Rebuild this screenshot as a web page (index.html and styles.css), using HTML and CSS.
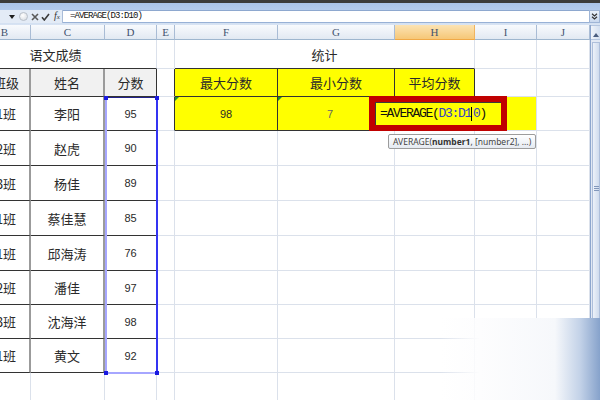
FILE: index.html
```html
<!DOCTYPE html>
<html lang="zh">
<head>
<meta charset="utf-8">
<title>Sheet</title>
<link rel="stylesheet" href="styles.css">
</head>
<body>
<div class="app">
  <div class="topband"></div>
  <div class="fbar">
    <div class="tools">
      <svg class="dd" width="6" height="4" viewBox="0 0 6 4"><path d="M0 0H6L3 4Z" fill="#1e1e1e"/></svg>
      <span class="knob"></span>
      <svg class="ico" width="8" height="8" viewBox="0 0 8 8"><path d="M1 1L7 7M7 1L1 7" stroke="#5a5a5a" stroke-width="1.6" fill="none"/></svg>
      <svg class="ico" width="9" height="8" viewBox="0 0 9 8"><path d="M1 4.2L3.3 7L8 1" stroke="#3a3a3a" stroke-width="1.6" fill="none"/></svg>
      <span class="fx">f<span class="fxs">x</span></span>
    </div>
    <div class="finput">=AVERAGE(D3:D10)</div>
    <div class="fexp"><svg width="7" height="7" viewBox="0 0 7 7"><path d="M1 0.8L3.5 3L6 0.8M1 3.8L3.5 6L6 3.8" stroke="#333" stroke-width="1.2" fill="none"/></svg></div>
  </div>
  <div class="main">
    <div class="sheetview">
      <div class="grid colhdr">
        <div>B</div><div>C</div><div>D</div><div>E</div><div>F</div><div>G</div><div class="hsel">H</div><div>I</div><div>J</div>
      </div>
      <div class="grid cells">
        <div class="c title span3">语文成绩</div><div class="c"></div><div class="c title2 span3">统计</div><div class="c"></div><div class="c"></div>

        <div class="c th b">班级</div><div class="c th">姓名</div><div class="c th last">分数</div><div class="c eL"></div><div class="c yh">最大分数</div><div class="c yh">最小分数</div><div class="c yh">平均分数</div><div class="c"></div><div class="c"></div>

        <div class="c td b">1班</div><div class="c td">李阳</div><div class="c td last n">95</div><div class="c eL"></div><div class="c yd n tri">98</div><div class="c yd n tri faint">7</div><div class="c yd"></div><div class="c yel"></div><div class="c"></div>

        <div class="c td b">2班</div><div class="c td">赵虎</div><div class="c td last n">90</div><div class="c"></div><div class="c"></div><div class="c"></div><div class="c"></div><div class="c"></div><div class="c"></div>

        <div class="c td b">3班</div><div class="c td">杨佳</div><div class="c td last n">89</div><div class="c"></div><div class="c"></div><div class="c"></div><div class="c"></div><div class="c"></div><div class="c"></div>

        <div class="c td b">1班</div><div class="c td">蔡佳慧</div><div class="c td last n">85</div><div class="c"></div><div class="c"></div><div class="c"></div><div class="c"></div><div class="c"></div><div class="c"></div>

        <div class="c td b">1班</div><div class="c td">邱海涛</div><div class="c td last n">76</div><div class="c"></div><div class="c"></div><div class="c"></div><div class="c"></div><div class="c"></div><div class="c"></div>

        <div class="c td b">2班</div><div class="c td">潘佳</div><div class="c td last n">97</div><div class="c"></div><div class="c"></div><div class="c"></div><div class="c"></div><div class="c"></div><div class="c"></div>

        <div class="c td b">3班</div><div class="c td">沈海洋</div><div class="c td last n">98</div><div class="c"></div><div class="c"></div><div class="c"></div><div class="c"></div><div class="c"></div><div class="c"></div>

        <div class="c td b">1班</div><div class="c td">黄文</div><div class="c td last n">92</div><div class="c"></div><div class="c"></div><div class="c"></div><div class="c"></div><div class="c"></div><div class="c"></div>

        <div class="c"></div><div class="c"></div><div class="c"></div><div class="c"></div><div class="c"></div><div class="c"></div><div class="c"></div><div class="c"></div><div class="c"></div>
      </div>

      <div class="selection">
        <span class="h h1"></span><span class="h h2"></span><span class="h h3"></span><span class="h h4"></span>
      </div>
      <div class="edit"><span class="k">=AVERAGE(</span><span class="ref">D3:D1</span><span class="caret"></span><span class="ref">0</span><span class="k">)</span></div>
      <div class="tip">AVERAGE(<b>number1</b>, [number2], ...)</div>
    </div>
    <div class="vscroll">
      <div class="up"><svg width="6" height="4" viewBox="0 0 6 4"><path d="M0 4H6L3 0Z" fill="#4a5d7e"/></svg></div>
      <div class="thumb"><span class="grip"></span></div>
    </div>
  </div>
  <div class="smudge"></div>
</div>
</body>
</html>
```

FILE: styles.css
```css
html, body {
  margin: 0;
  padding: 0;
}
body {
  width: 600px;
  height: 400px;
  overflow: hidden;
  background: #ffffff;
  font-family: "Noto Sans CJK SC", "Liberation Sans", sans-serif;
}
.app {
  position: relative;
  width: 600px;
  height: 400px;
  overflow: hidden;
}
.topband {
  height: 3px;
  background: #3b3b39;
}
.fbar {
  height: 22px;
  box-sizing: border-box;
  padding-top: 7px;
  display: flex;
  align-items: flex-start;
  background: linear-gradient(#a9c3e7, #bcd1ee 60%, #d9e4f3);
}
.tools {
  width: 63px;
  height: 13px;
  box-sizing: border-box;
  display: flex;
  align-items: center;
  padding-left: 9px;
  background: #e3ebf6;
  border-right: 1px solid #a9bcd8;
}
.dd { margin-right: 4px; }
.knob {
  width: 9px;
  height: 9px;
  border-radius: 50%;
  box-sizing: border-box;
  border: 1px solid #b8bfc9;
  background: radial-gradient(circle at 40% 35%, #ffffff, #d3d8df);
  margin-right: 3px;
}
.ico { margin-right: 2px; }
.fx {
  font-family: "Liberation Serif", serif;
  font-style: italic;
  font-size: 10px;
  color: #333;
  line-height: 10px;
  margin-left: 2px;
}
.fxs { font-size: 7px; }
.finput {
  flex: 1;
  height: 13px;
  box-sizing: border-box;
  background: #ffffff;
  border-top: 1px solid #8ea8cf;
  border-bottom: 1px solid #98b1d6;
  padding-left: 7px;
  font-family: "Liberation Mono", monospace;
  font-size: 9px;
  letter-spacing: -0.9px;
  line-height: 11px;
  color: #111;
}
.fexp {
  width: 11px;
  height: 13px;
  box-sizing: border-box;
  border: 1px solid #9fb5d6;
  background: linear-gradient(#e9f0f9, #c9d8ee);
  display: flex;
  align-items: center;
  justify-content: center;
}
.main {
  display: flex;
  height: 375px;
}
.sheetview {
  position: relative;
  width: 590px;
  overflow: hidden;
}
.grid {
  display: grid;
  grid-template-columns: 52px 74px 52px 18px 103px 117px 80px 62px 53px;
  margin-left: -21px;
}
.colhdr {
  height: 15px;
}
.colhdr > div {
  box-sizing: border-box;
  border-right: 1px solid #a9bcd5;
  border-bottom: 1px solid #9eb6ce;
  background: linear-gradient(#f8fafd, #e2e9f2);
  display: flex;
  align-items: center;
  justify-content: center;
  font-family: "Liberation Serif", serif;
  font-size: 11px;
  color: #43546f;
}
.colhdr > .hsel {
  background: linear-gradient(#fbe3b4, #f6c777);
  border-right-color: #efb460;
  border-bottom-color: #f0a947;
}
.cells {
  grid-template-rows: 29px 28px 34px 35px 35px 35px 35px 34px 34px 34px 34px;
}
.c {
  box-sizing: border-box;
  border-right: 1px solid #dbe1eb;
  border-bottom: 1px solid #dbe1eb;
  display: flex;
  align-items: center;
  justify-content: center;
  font-size: 13px;
  color: #2a2a2a;
  position: relative;
  white-space: nowrap;
}
.span3 { grid-column: span 3; }
.title {
  border-bottom-color: #333;
  padding-right: 24px;
}
.title2 {
  border-bottom-color: #333;
}
.th, .td {
  border-right: 2px solid #9b9b9b;
  border-bottom: 1px solid #333;
}
.th { background: #f1f1f1; }
.b { padding-left: 4px; }
.last { border-right: 1px solid #333; }
.n {
  font-family: "Liberation Sans", sans-serif;
  font-size: 11px;
}
.eL { border-right-color: #333; }
.yh, .yd {
  background: #ffff00;
  border-right: 1px solid #333;
  border-bottom: 1px solid #333;
}
.yel { background: #ffff00; }
.faint {
  color: #666;
  padding-right: 12px;
}
.tri::before {
  content: "";
  position: absolute;
  left: 0;
  top: 0;
  border-top: 4px solid #23902a;
  border-right: 4px solid transparent;
}
.selection {
  position: absolute;
  left: 105px;
  top: 72px;
  width: 53px;
  height: 277px;
  box-sizing: border-box;
  border-left: 2px solid #a6a6ff;
  border-right: 2px solid #3434f2;
  border-bottom: 2px solid #a6a6ff;
  border-top: 1px solid #22228a;
}
.h {
  position: absolute;
  width: 4px;
  height: 4px;
  background: #1a1ae0;
}
.h1 { left: -3px; top: -2px; }
.h2 { right: -3px; top: -2px; }
.h3 { left: -3px; bottom: -3px; }
.h4 { right: -3px; bottom: -3px; }
.edit {
  position: absolute;
  left: 369px;
  top: 71px;
  width: 138px;
  height: 35px;
  box-sizing: border-box;
  border: 6px solid #c00000;
  background: #ffff00;
  box-shadow: inset 1px 1px 0 #3a3a3a;
  display: flex;
  align-items: center;
  padding-left: 5px;
  font-family: "Liberation Mono", monospace;
  font-size: 13px;
  letter-spacing: -1.3px;
  white-space: nowrap;
}
.k { color: #111; }
.ref { color: #3442c4; }
.caret {
  width: 1px;
  height: 14px;
  background: #000;
  margin: 0 1px 0 0;
}
.tip {
  position: absolute;
  left: 388px;
  top: 109px;
  height: 15px;
  box-sizing: border-box;
  padding: 0 4px;
  border: 1px solid #9c9c9c;
  border-radius: 2px;
  background: linear-gradient(#ffffff, #e5eaf1);
  font-family: "Noto Sans", "Liberation Sans", sans-serif;
  font-size: 8.5px;
  line-height: 13px;
  color: #444;
  white-space: nowrap;
}
.tip b { color: #333; }
.vscroll {
  width: 10px;
  box-sizing: border-box;
  border-left: 1px solid #8da6cd;
  background: #e2e9f4;
  display: flex;
  flex-direction: column;
}
.up {
  height: 15px;
  box-sizing: border-box;
  border-top: 1px solid #b5c6df;
  border-bottom: 1px solid #b5c6df;
  background: linear-gradient(to right, #f0f4fa, #d3dff0);
  display: flex;
  align-items: flex-end;
  justify-content: center;
  padding-bottom: 2px;
}
.thumb {
  margin: 2px 0 0 1px;
  height: 293px;
  box-sizing: border-box;
  border: 1px solid #aebfdb;
  background: linear-gradient(to right, #edf2f9, #cfdbed);
  display: flex;
  align-items: center;
  justify-content: center;
}
.grip {
  width: 5px;
  height: 5px;
  background: repeating-linear-gradient(#8197bb 0 1px, transparent 1px 2px);
}
.smudge {
  position: absolute;
  left: 440px;
  top: 318px;
  width: 160px;
  height: 82px;
  background: linear-gradient(to right, rgba(255,255,255,0) 0, #fdfdfe 40px, #f6f8fb 115px, #c3d2e8 140px, #86a2cb 160px);
}
```
